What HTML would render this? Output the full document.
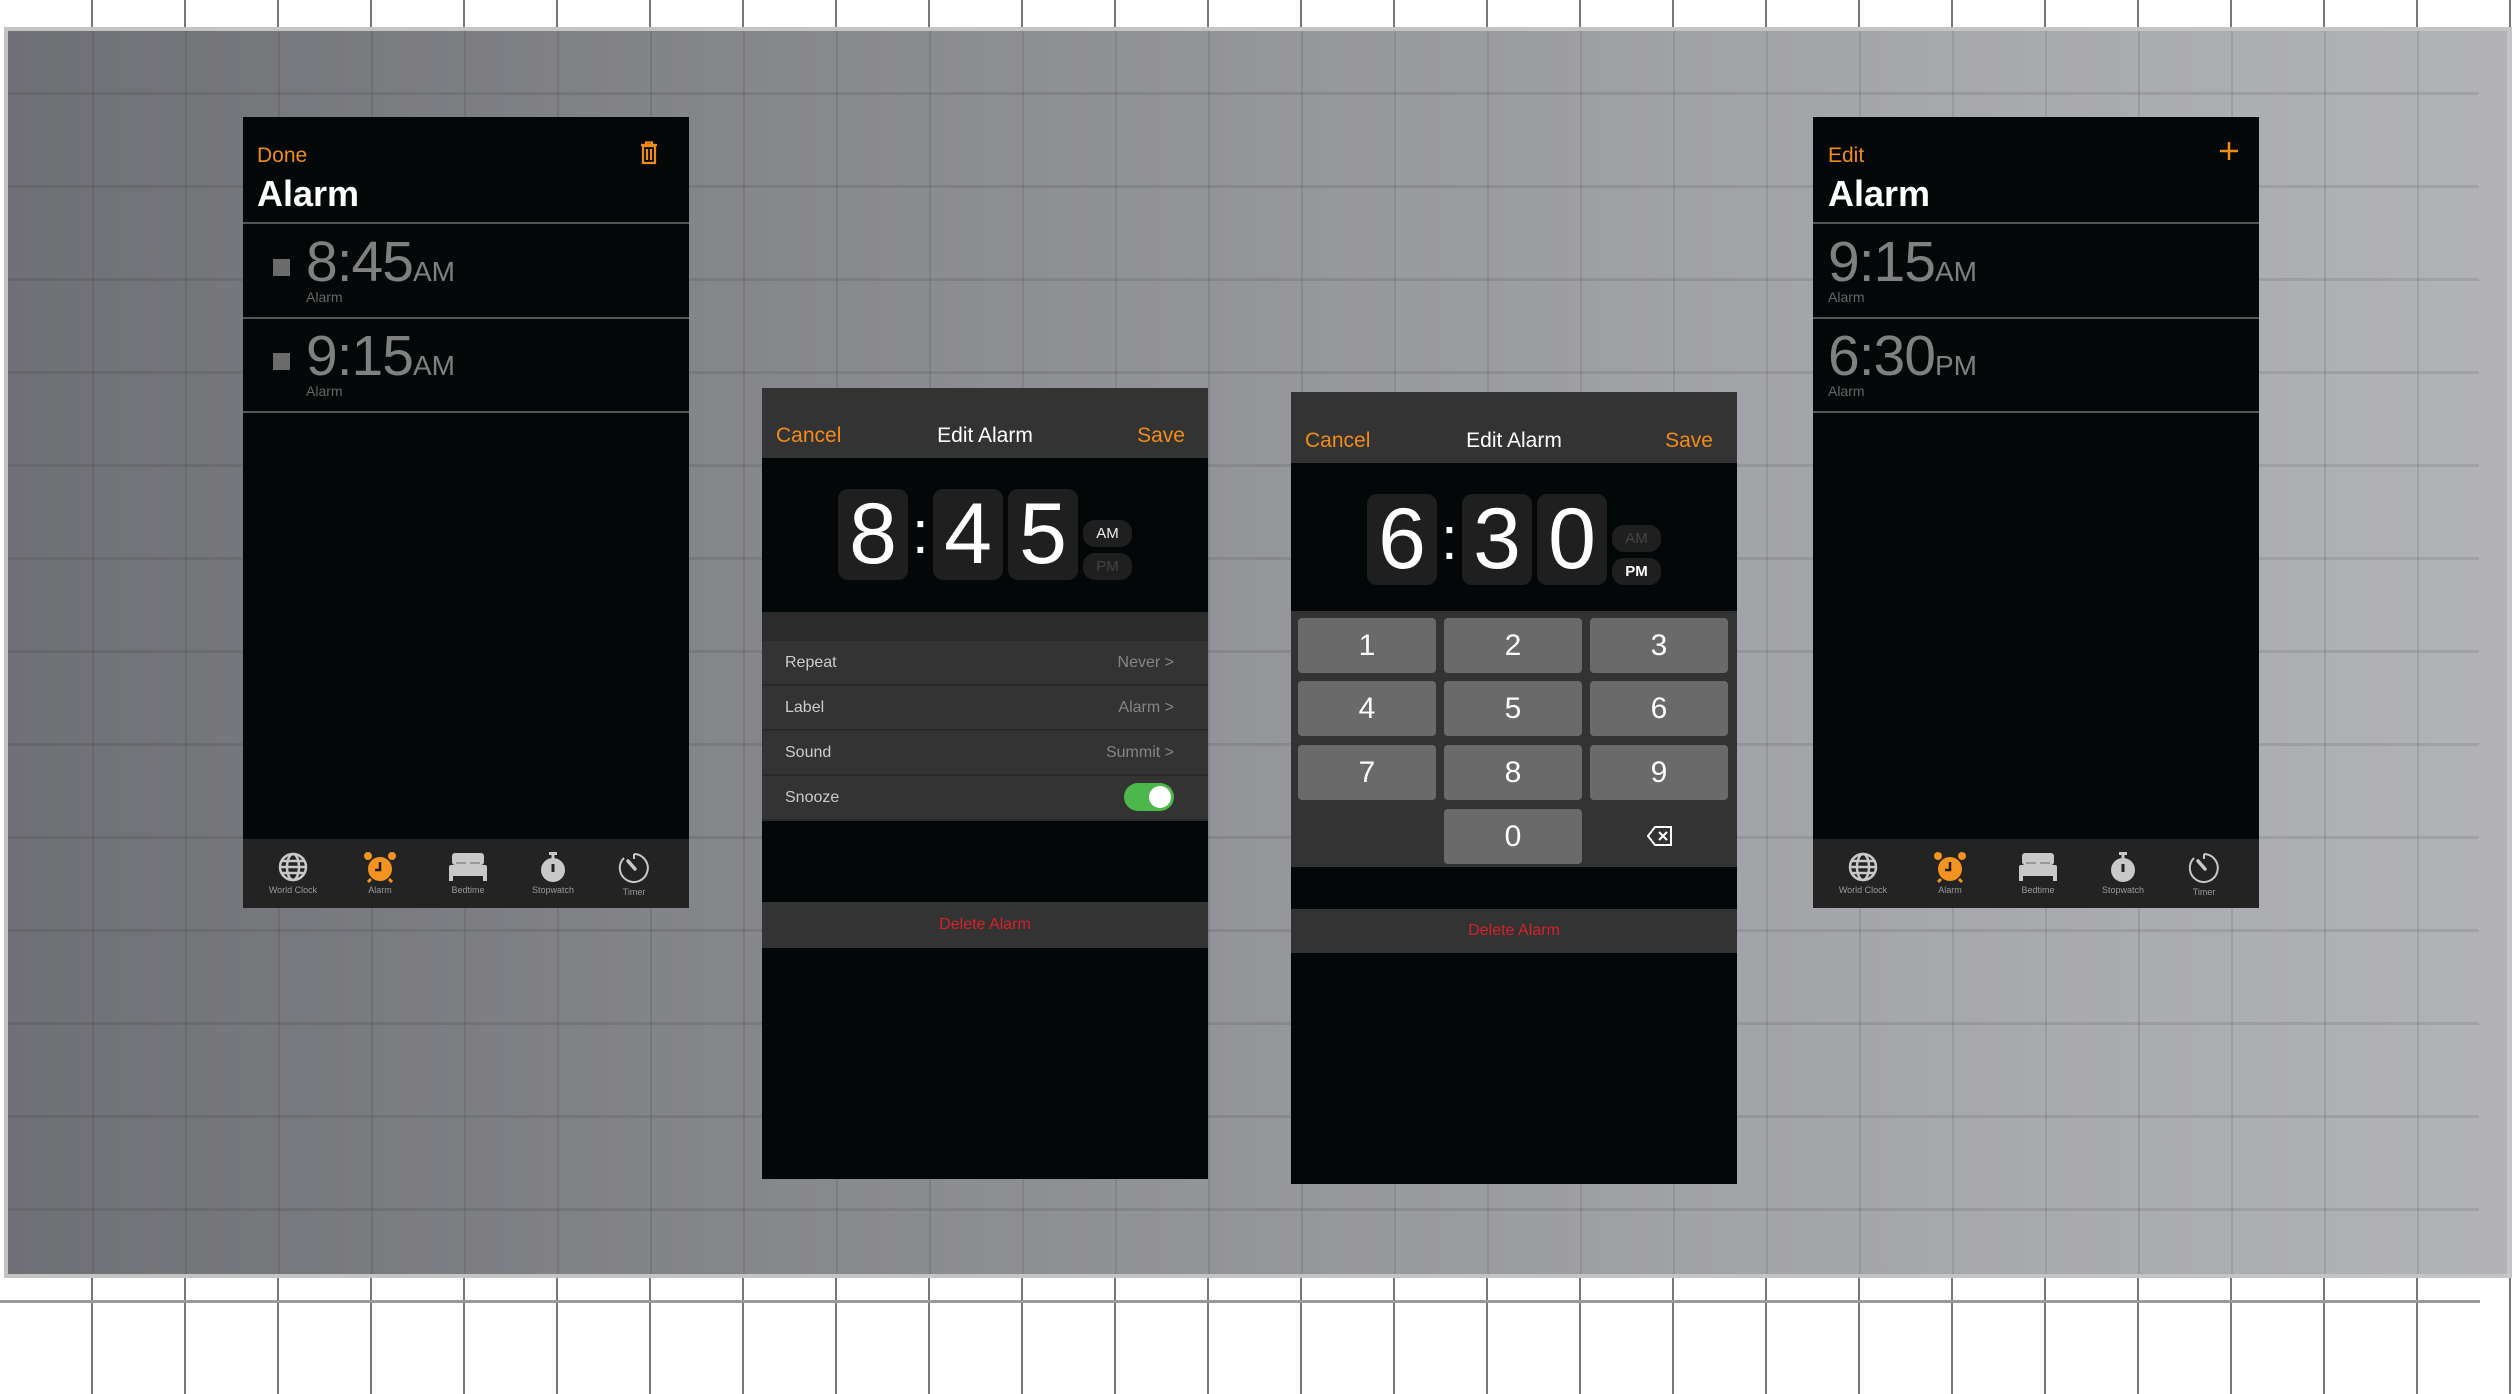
<!DOCTYPE html>
<html><head><meta charset="utf-8"><style>
*{margin:0;padding:0;box-sizing:border-box}
body{width:2512px;height:1394px;position:relative;overflow:hidden;background:#fff;font-family:"Liberation Sans",sans-serif}
.abs{position:absolute}
#vl{position:absolute;left:0;top:0;width:2512px;height:1394px;background-image:repeating-linear-gradient(90deg,transparent 0 91px,#777 91px 93px)}
#bg{position:absolute;left:4px;top:27px;width:2508px;height:1251px;background:#c4c4c4}
#gr{position:absolute;left:8px;top:31px;width:2499px;height:1243px;background:linear-gradient(90deg,#6f7075 0%,#86878b 30%,#a3a4a8 70%,#b2b3b6 100%);overflow:hidden}
#gv{position:absolute;left:0;top:0;width:100%;height:100%;background-image:repeating-linear-gradient(90deg,transparent 0 84px,rgba(0,0,0,.09) 84px 86px,transparent 86px 93px)}
#gh{position:absolute;left:0;top:0;width:2471px;height:100%;background-image:repeating-linear-gradient(180deg,transparent 0 61px,rgba(0,0,0,.09) 61px 64px,transparent 64px 93px)}
.ph{position:absolute;background:#040708;overflow:hidden}
.or{color:#f28c18}
.list .hdr{position:absolute;left:0;top:0;width:100%;height:107px;border-bottom:2px solid #555}
.row{position:absolute;left:0;width:100%;height:94px;border-bottom:2px solid #555}
.t{position:absolute;top:5px;font-size:57px;color:#808080;letter-spacing:-1px;font-weight:300;line-height:1.15}
.t span{font-size:28px;letter-spacing:0}
.lb{position:absolute;top:64px;font-size:14px;color:#666}
.sq{position:absolute;left:30px;top:34px;width:17px;height:17px;background:#6b6b6b}
.tab{position:absolute;left:0;top:722px;width:100%;height:70px;background:#232323}
.ti{position:absolute;top:12px;width:60px;margin-left:-30px;text-align:center;font-size:9px;color:#999}
.ti svg{display:block;margin:0 auto 2px}
.eh{position:absolute;left:0;top:0;width:100%;height:70px;background:#333}
.eh div{position:absolute;top:36px;font-size:21px}
.box{position:absolute;width:70px;height:91px;background:#1f1f1f;border-radius:10px;color:#fff;font-size:86px;text-align:center;line-height:91px;font-weight:300}
.col{position:absolute;color:#fff;font-size:60px}
.pill{position:absolute;width:49px;height:27px;border-radius:12px;background:#1f1f1f;font-size:15px;text-align:center;line-height:27px}
.set{position:absolute;left:0;width:100%;height:45px;background:#333;border-bottom:2px solid #2a2a2a;font-size:16px;color:#ccc}
.set .l{position:absolute;left:23px;top:13px}
.set .r{position:absolute;right:34px;top:13px;color:#858585}
.del{position:absolute;left:0;width:100%;height:46px;background:#333;color:#d2222c;text-align:center;line-height:46px;font-size:16px}
.key{position:absolute;width:138px;height:55px;background:#6a6a6a;border-radius:4px;color:#fff;font-size:30px;text-align:center;line-height:55px}
</style></head><body>
<div id="vl"></div>
<div class="abs" style="left:0;top:1300px;width:2480px;height:3px;background:#999"></div>
<div id="bg"></div>
<div id="gr"><div id="gv"></div><div id="gh"></div></div>

<!-- phone 1 -->
<div class="ph list" style="left:243px;top:117px;width:446px;height:791px">
 <div class="hdr">
  <div class="abs or" style="left:14px;top:27px;font-size:21px">Done</div>
  <svg class="abs" style="left:396px;top:24px" width="20" height="24" viewBox="0 0 20 24"><path d="M2 4h16M7 4V1.5h6V4M4 5h12v17H4zM8 8v11M12 8v11" stroke="#f28c18" stroke-width="2.2" fill="none"/></svg>
  <div class="abs" style="left:14px;top:56px;font-size:36px;font-weight:bold;color:#fff">Alarm</div>
 </div>
 <div class="row" style="top:108px"><div class="sq"></div><div class="t" style="left:63px">8:45<span>AM</span></div><div class="lb" style="left:63px">Alarm</div></div>
 <div class="row" style="top:202px"><div class="sq"></div><div class="t" style="left:63px">9:15<span>AM</span></div><div class="lb" style="left:63px">Alarm</div></div>
 <div class="tab">
  <div class="ti" style="left:50px"><svg width="32" height="32" viewBox="0 0 32 32"><circle cx="16" cy="16" r="13" fill="none" stroke="#c8c8c8" stroke-width="2.5"/><ellipse cx="16" cy="16" rx="6" ry="13" fill="none" stroke="#c8c8c8" stroke-width="2.5"/><path d="M3 16h26M5 10h22M5 22h22" stroke="#c8c8c8" stroke-width="2.5"/></svg>World Clock</div>
  <div class="ti" style="left:137px"><svg width="34" height="32" viewBox="0 0 34 32"><circle cx="17" cy="18" r="12" fill="#f39320"/><circle cx="5" cy="5" r="4" fill="#f39320"/><circle cx="29" cy="5" r="4" fill="#f39320"/><path d="M17 11v8h-5" stroke="#231b10" stroke-width="2.5" fill="none"/><path d="M8 28l-3 3M26 28l3 3" stroke="#f39320" stroke-width="3"/></svg>Alarm</div>
  <div class="ti" style="left:225px"><svg width="40" height="32" viewBox="0 0 40 32"><rect x="4" y="2" width="32" height="12" rx="3" fill="#c8c8c8"/><rect x="1" y="14" width="38" height="11" rx="2" fill="#c8c8c8"/><rect x="1" y="24" width="4" height="6" fill="#c8c8c8"/><rect x="35" y="24" width="4" height="6" fill="#c8c8c8"/><path d="M8 12h10M22 12h10" stroke="#888" stroke-width="1.5"/></svg>Bedtime</div>
  <div class="ti" style="left:310px"><svg width="32" height="32" viewBox="0 0 32 32"><rect x="12" y="1" width="8" height="3" fill="#c8c8c8"/><rect x="14.5" y="3" width="3" height="5" fill="#c8c8c8"/><circle cx="16" cy="19" r="12" fill="#c8c8c8"/><rect x="14.5" y="13" width="3" height="8" fill="#232323"/></svg>Stopwatch</div>
  <div class="ti" style="left:391px"><svg width="34" height="34" viewBox="0 0 34 34"><path d="M17 3A14 14 0 1 1 7 7" fill="none" stroke="#c8c8c8" stroke-width="2"/><path d="M17 3v5" stroke="#c8c8c8" stroke-width="2"/><path d="M11 10l7 8" stroke="#c8c8c8" stroke-width="3.5" stroke-linecap="round"/></svg>Timer</div>
 </div>
</div>

<!-- phone 2 -->
<div class="ph" style="left:762px;top:388px;width:446px;height:791px">
 <div class="eh"><div class="or" style="left:14px">Cancel</div><div style="left:0;width:100%;text-align:center;color:#fff">Edit Alarm</div><div class="or" style="right:23px">Save</div></div>
 <div class="box" style="left:76px;top:101px">8</div>
 <div class="col" style="left:150px;top:110px">:</div>
 <div class="box" style="left:171px;top:101px">4</div>
 <div class="box" style="left:246px;top:101px">5</div>
 <div class="pill" style="left:321px;top:132px;color:#eee">AM</div>
 <div class="pill" style="left:321px;top:165px;color:#444">PM</div>
 <div class="abs" style="left:0;top:224px;width:100%;height:29px;background:#2b2b2b"></div>
 <div class="set" style="top:253px"><span class="l">Repeat</span><span class="r">Never &gt;</span></div>
 <div class="set" style="top:298px"><span class="l">Label</span><span class="r">Alarm &gt;</span></div>
 <div class="set" style="top:343px"><span class="l">Sound</span><span class="r">Summit &gt;</span></div>
 <div class="set" style="top:388px"><span class="l">Snooze</span><div class="abs" style="right:34px;top:7px;width:50px;height:28px;border-radius:14px;background:#4cb84c"><div class="abs" style="right:3px;top:3px;width:22px;height:22px;border-radius:11px;background:#fff"></div></div></div>
 <div class="del" style="top:514px">Delete Alarm</div>
</div>

<!-- phone 3 -->
<div class="ph" style="left:1291px;top:392px;width:446px;height:792px">
 <div class="eh" style="height:71px"><div class="or" style="left:14px;top:37px">Cancel</div><div style="left:0;width:100%;text-align:center;color:#fff;top:37px">Edit Alarm</div><div class="or" style="right:24px;top:37px">Save</div></div>
 <div class="box" style="left:76px;top:102px">6</div>
 <div class="col" style="left:150px;top:112px">:</div>
 <div class="box" style="left:171px;top:102px">3</div>
 <div class="box" style="left:246px;top:102px">0</div>
 <div class="pill" style="left:321px;top:133px;color:#444">AM</div>
 <div class="pill" style="left:321px;top:166px;color:#fff;font-weight:bold">PM</div>
 <div class="abs" style="left:0;top:219px;width:100%;height:256px;background:#333">
  <div class="key" style="left:7px;top:7px">1</div><div class="key" style="left:153px;top:7px">2</div><div class="key" style="left:299px;top:7px">3</div>
  <div class="key" style="left:7px;top:70px">4</div><div class="key" style="left:153px;top:70px">5</div><div class="key" style="left:299px;top:70px">6</div>
  <div class="key" style="left:7px;top:134px">7</div><div class="key" style="left:153px;top:134px">8</div><div class="key" style="left:299px;top:134px">9</div>
  <div class="key" style="left:153px;top:198px">0</div>
  <svg class="abs" style="left:356px;top:214px" width="26" height="22" viewBox="0 0 26 22"><path d="M8 2h16v18H8L1 11z" fill="none" stroke="#fff" stroke-width="2"/><path d="M12 7l8 8M20 7l-8 8" stroke="#fff" stroke-width="2"/></svg>
 </div>
 <div class="del" style="top:517px;height:44px;line-height:44px">Delete Alarm</div>
</div>

<!-- phone 4 -->
<div class="ph list" style="left:1813px;top:117px;width:446px;height:791px">
 <div class="hdr">
  <div class="abs or" style="left:15px;top:27px;font-size:21px">Edit</div>
  <svg class="abs" style="left:406px;top:24px" width="20" height="20" viewBox="0 0 20 20"><path d="M10 1v18M1 10h18" stroke="#f28c18" stroke-width="2.5"/></svg>
  <div class="abs" style="left:15px;top:56px;font-size:36px;font-weight:bold;color:#fff">Alarm</div>
 </div>
 <div class="row" style="top:108px"><div class="t" style="left:15px">9:15<span>AM</span></div><div class="lb" style="left:15px">Alarm</div></div>
 <div class="row" style="top:202px"><div class="t" style="left:15px">6:30<span>PM</span></div><div class="lb" style="left:15px">Alarm</div></div>
 <div class="tab">
  <div class="ti" style="left:50px"><svg width="32" height="32" viewBox="0 0 32 32"><circle cx="16" cy="16" r="13" fill="none" stroke="#c8c8c8" stroke-width="2.5"/><ellipse cx="16" cy="16" rx="6" ry="13" fill="none" stroke="#c8c8c8" stroke-width="2.5"/><path d="M3 16h26M5 10h22M5 22h22" stroke="#c8c8c8" stroke-width="2.5"/></svg>World Clock</div>
  <div class="ti" style="left:137px"><svg width="34" height="32" viewBox="0 0 34 32"><circle cx="17" cy="18" r="12" fill="#f39320"/><circle cx="5" cy="5" r="4" fill="#f39320"/><circle cx="29" cy="5" r="4" fill="#f39320"/><path d="M17 11v8h-5" stroke="#231b10" stroke-width="2.5" fill="none"/><path d="M8 28l-3 3M26 28l3 3" stroke="#f39320" stroke-width="3"/></svg>Alarm</div>
  <div class="ti" style="left:225px"><svg width="40" height="32" viewBox="0 0 40 32"><rect x="4" y="2" width="32" height="12" rx="3" fill="#c8c8c8"/><rect x="1" y="14" width="38" height="11" rx="2" fill="#c8c8c8"/><rect x="1" y="24" width="4" height="6" fill="#c8c8c8"/><rect x="35" y="24" width="4" height="6" fill="#c8c8c8"/><path d="M8 12h10M22 12h10" stroke="#888" stroke-width="1.5"/></svg>Bedtime</div>
  <div class="ti" style="left:310px"><svg width="32" height="32" viewBox="0 0 32 32"><rect x="12" y="1" width="8" height="3" fill="#c8c8c8"/><rect x="14.5" y="3" width="3" height="5" fill="#c8c8c8"/><circle cx="16" cy="19" r="12" fill="#c8c8c8"/><rect x="14.5" y="13" width="3" height="8" fill="#232323"/></svg>Stopwatch</div>
  <div class="ti" style="left:391px"><svg width="34" height="34" viewBox="0 0 34 34"><path d="M17 3A14 14 0 1 1 7 7" fill="none" stroke="#c8c8c8" stroke-width="2"/><path d="M17 3v5" stroke="#c8c8c8" stroke-width="2"/><path d="M11 10l7 8" stroke="#c8c8c8" stroke-width="3.5" stroke-linecap="round"/></svg>Timer</div>
 </div>
</div>
</body></html>
